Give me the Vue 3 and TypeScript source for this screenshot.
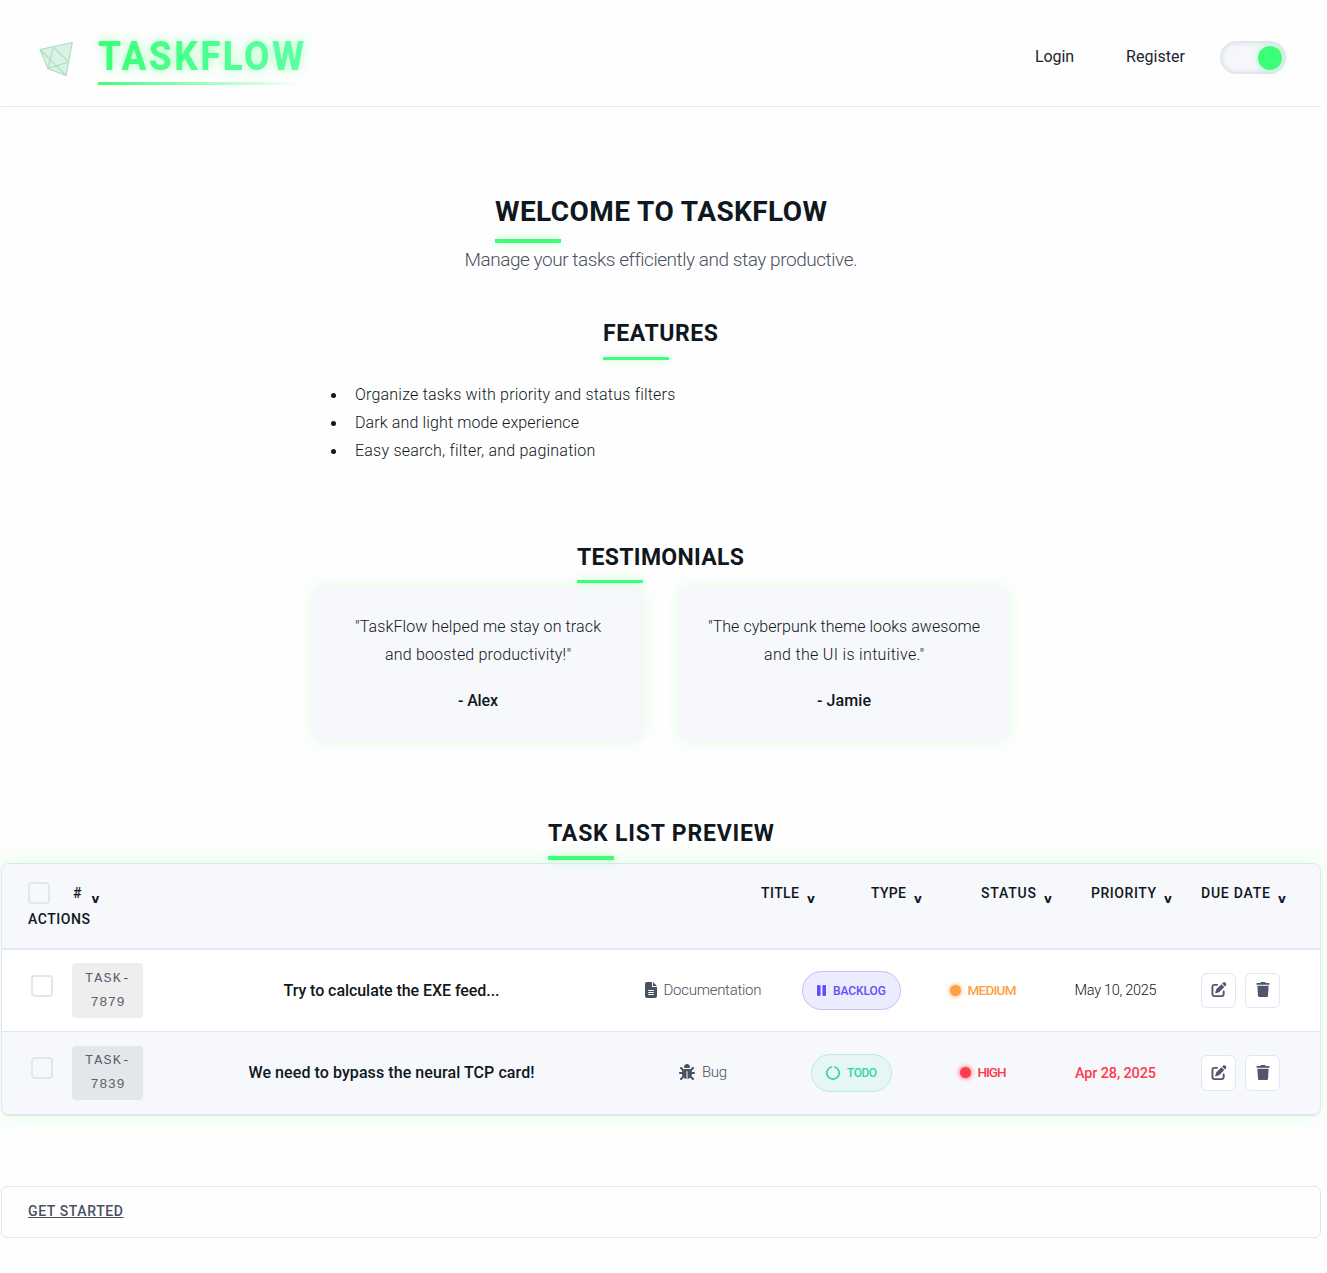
<script setup lang="ts">
import type { Directive } from 'vue'

/** Tracks a single line of text so that it fills the given width in pixels. */
const vFit: Directive<HTMLElement, number> = {
  mounted(el, binding) {
    const count = (el.textContent ?? '').trim().length
    const natural = parseFloat(getComputedStyle(el).width)
    if (count < 2 || !natural) return
    const gap = (binding.value - natural) / (count - 1)
    el.style.letterSpacing = `${gap}px`
    el.style.marginRight = `${-gap}px`
  },
}

const features = [
  { text: 'Organize tasks with priority and status filters', width: 320 },
  { text: 'Dark and light mode experience', width: 224 },
  { text: 'Easy search, filter, and pagination', width: 240 },
]

const testimonials = [
  {
    lines: [
      { text: '"TaskFlow helped me stay on track', width: 246 },
      { text: 'and boosted productivity!"', width: 186 },
    ],
    author: '- Alex',
    width: 40,
  },
  {
    lines: [
      { text: '"The cyberpunk theme looks awesome', width: 272 },
      { text: 'and the UI is intuitive."', width: 160 },
    ],
    author: '- Jamie',
    width: 54,
  },
]

const columns = [
  { key: 'id', label: '#', width: 10 },
  { key: 'title', label: 'TITLE', width: 38 },
  { key: 'type', label: 'TYPE', width: 35 },
  { key: 'status', label: 'STATUS', width: 55 },
  { key: 'priority', label: 'PRIORITY', width: 65 },
  { key: 'due', label: 'DUE DATE', width: 69 },
]

const tasks = [
  {
    id: '7879',
    title: 'Try to calculate the EXE feed...', titleW: 216,
    type: 'Documentation', typeW: 98,
    status: 'BACKLOG', statusW: 53,
    priority: 'MEDIUM', priorityW: 49,
    due: 'May 10, 2025', dueW: 82,
    overdue: false,
  },
  {
    id: '7839',
    title: 'We need to bypass the neural TCP card!', titleW: 286,
    type: 'Bug', typeW: 25,
    status: 'TODO', statusW: 30,
    priority: 'HIGH', priorityW: 29,
    due: 'Apr 28, 2025', dueW: 81,
    overdue: true,
  },
]
</script>

<template>
  <div class="page">
    <header class="top">
      <svg class="gem" viewBox="0 0 36 36" width="36" height="36">
        <path class="gem-face" d="M2 8.5 34.3 1.5 28 34.5 10 27.5Z" />
        <path d="M2 8.5 28 34.5M10 27.5 15.3 6 30.7 21ZM10 27.5 30.7 21" />
      </svg>
      <div class="brand"><span v-fit="229" class="brand-text">TASKFLOW</span></div>
      <nav class="nav">
        <a class="login"><span v-fit="39">Login</span></a>
        <a class="register"><span v-fit="59">Register</span></a>
        <div class="toggle"><i></i></div>
      </nav>
    </header>

    <main>
      <section class="hero">
        <h1><span v-fit="332">WELCOME TO TASKFLOW</span></h1>
        <p><span v-fit="392">Manage your tasks efficiently and stay productive.</span></p>
      </section>

      <section class="features">
        <h2 class="nudged"><span v-fit="115">FEATURES</span></h2>
        <ul>
          <li v-for="f in features" :key="f.text"><span v-fit="f.width">{{ f.text }}</span></li>
        </ul>
      </section>

      <section class="testimonials">
        <h2 class="nudged"><span v-fit="167">TESTIMONIALS</span></h2>
        <div class="cards">
          <article v-for="t in testimonials" :key="t.author" class="card">
            <p v-for="l in t.lines" :key="l.text"><span v-fit="l.width">{{ l.text }}</span></p>
            <p class="author"><span v-fit="t.width">{{ t.author }}</span></p>
          </article>
        </div>
      </section>

      <section class="preview">
        <h2 class="thick"><span v-fit="226">TASK LIST PREVIEW</span></h2>
        <div class="table">
          <div class="thead">
            <i class="check"></i>
            <div v-for="c in columns" :key="c.key" class="th" :class="`th-${c.key}`">
              <span v-fit="c.width">{{ c.label }}</span><b class="sort">v</b>
            </div>
            <div class="th"><span v-fit="62">ACTIONS</span></div>
          </div>

          <div v-for="t in tasks" :key="t.id" class="row">
            <i class="check"></i>
            <div class="task-id"><span v-fit="45">TASK-</span><span v-fit="34">{{ t.id }}</span></div>
            <div class="cell title"><span v-fit="t.titleW">{{ t.title }}</span></div>
            <div class="cell type">
              <svg v-if="t.type === 'Bug'" viewBox="0 0 512 512" width="16" height="16">
                <path d="M256 0c53 0 96 43 96 96v3.6c0 15.7-12.7 28.4-28.4 28.4H188.4c-15.7 0-28.4-12.7-28.4-28.4V96c0-53 43-96 96-96zM41.4 105.4c12.5-12.5 32.8-12.5 45.3 0l64 64c.7 .7 1.3 1.4 1.9 2.1c14.2-7.3 30.4-11.4 47.5-11.4H312c17.1 0 33.2 4.1 47.5 11.4c.6-.7 1.2-1.4 1.9-2.1l64-64c12.5-12.5 32.8-12.5 45.3 0s12.5 32.8 0 45.3l-64 64c-.7 .7-1.4 1.3-2.1 1.9c6.2 12 10.1 25.3 11.1 39.5H480c17.7 0 32 14.3 32 32s-14.3 32-32 32H416c0 24.6-5.5 47.8-15.4 68.6c2.2 1.3 4.2 2.9 6 4.8l64 64c12.5 12.5 12.5 32.8 0 45.3s-32.8 12.5-45.3 0l-63.1-63.1c-24.5 21.8-55.8 36.2-90.3 39.6V240c0-8.8-7.2-16-16-16s-16 7.2-16 16V479.2c-34.5-3.4-65.8-17.8-90.3-39.6L86.6 502.6c-12.5 12.5-32.8 12.5-45.3 0s-12.5-32.8 0-45.3l64-64c1.9-1.9 3.9-3.4 6-4.8C101.5 367.8 96 344.6 96 320H32c-17.7 0-32-14.3-32-32s14.3-32 32-32H96.3c1.1-14.1 5-27.5 11.1-39.5c-.7-.6-1.4-1.2-2.1-1.9l-64-64c-12.5-12.5-12.5-32.8 0-45.3z" />
              </svg>
              <svg v-else viewBox="0 0 384 512" width="12" height="16">
                <path d="M64 0C28.7 0 0 28.7 0 64V448c0 35.3 28.7 64 64 64H320c35.3 0 64-28.7 64-64V160H256c-17.7 0-32-14.3-32-32V0H64zM256 0V128H384L256 0zM112 256H272c8.8 0 16 7.2 16 16s-7.2 16-16 16H112c-8.8 0-16-7.2-16-16s7.2-16 16-16zm0 64H272c8.8 0 16 7.2 16 16s-7.2 16-16 16H112c-8.8 0-16-7.2-16-16s7.2-16 16-16zm0 64H272c8.8 0 16 7.2 16 16s-7.2 16-16 16H112c-8.8 0-16-7.2-16-16s7.2-16 16-16z" />
              </svg>
              <span v-fit="t.typeW">{{ t.type }}</span>
            </div>
            <div class="cell">
              <div class="pill" :class="t.status.toLowerCase()">
                <svg v-if="t.status === 'TODO'" viewBox="0 0 14 14" width="14" height="14">
                  <path d="M5.2 1A6.2 6.2 0 1 0 8.8 1" fill="none" stroke="currentColor" stroke-width="1.7" stroke-linecap="round" />
                </svg>
                <svg v-else viewBox="0 0 9 11" width="9" height="11">
                  <rect x="0" y="0" width="3.6" height="11" rx="1.2" />
                  <rect x="5.4" y="0" width="3.6" height="11" rx="1.2" />
                </svg>
                <span v-fit="t.statusW">{{ t.status }}</span>
              </div>
            </div>
            <div class="cell prio" :class="t.priority.toLowerCase()">
              <i></i><span v-fit="t.priorityW">{{ t.priority }}</span>
            </div>
            <div class="cell due" :class="{ overdue: t.overdue }"><span v-fit="t.dueW">{{ t.due }}</span></div>
            <div class="actions">
              <button type="button">
                <svg viewBox="0 0 512 512" width="16" height="15">
                  <path d="M471.6 21.7c-21.9-21.9-57.3-21.9-79.2 0L362.3 51.7l97.9 97.9 30.1-30.1c21.9-21.9 21.9-57.3 0-79.2L471.6 21.7zm-299.2 220c-6.1 6.1-10.8 13.6-13.5 21.9l-29.6 88.8c-2.9 8.6-.6 18.1 5.8 24.6s15.9 8.7 24.6 5.8l88.8-29.6c8.2-2.7 15.7-7.4 21.9-13.5L437.7 172.3 339.7 74.3 172.4 241.7zM96 64C43 64 0 107 0 160V416c0 53 43 96 96 96H352c53 0 96-43 96-96V320c0-17.7-14.3-32-32-32s-32 14.3-32 32v96c0 17.7-14.3 32-32 32H96c-17.7 0-32-14.3-32-32V160c0-17.7 14.3-32 32-32h96c17.7 0 32-14.3 32-32s-14.3-32-32-32H96z" />
                </svg>
              </button>
              <button type="button">
                <svg viewBox="0 0 448 512" width="14" height="15">
                  <path d="M135.2 17.7L128 32H32C14.3 32 0 46.3 0 64S14.3 96 32 96H416c17.7 0 32-14.3 32-32s-14.3-32-32-32H320l-7.2-14.3C307.4 6.8 296.3 0 284.2 0H163.8c-12.1 0-23.2 6.8-28.6 17.7zM416 128H32L53.2 467c1.6 25.3 22.6 45 47.9 45H346.9c25.3 0 46.3-19.7 47.9-45L416 128z" />
                </svg>
              </button>
            </div>
          </div>
        </div>
      </section>

      <a class="cta"><span v-fit="95">GET STARTED</span></a>
    </main>
  </div>
</template>

<style>
body {
  background: #fefefe;
}
</style>

<style scoped>
.page {
  width: 1320px;
  margin-left: 1px;
  height: 1273px;
  font-family: Roboto, 'Liberation Sans', sans-serif;
  font-size: 16px;
  font-weight: 300;
  color: #0f1720;
}
.page *,
.page *::after {
  box-sizing: border-box;
}
.page span {
  display: inline-block;
  white-space: nowrap;
}
svg {
  display: block;
  fill: currentColor;
}
p,
h1,
h2,
ul {
  margin: 0;
  padding: 0;
}

/* header */
.top {
  height: 107px;
  padding: 8px 35px 0 37px;
  display: flex;
  align-items: center;
  border-bottom: 1px solid #dfe8f0;
}
.gem {
  margin: 3px 24px 0 0;
  fill: none;
  stroke: #a9dfc2;
  stroke-width: 1.1;
}
.gem-face {
  fill: #dcf1e6;
}
.gem path:last-child {
  fill: none;
}
.brand {
  position: relative;
  width: 207px;
  height: 56px;
}
.brand::after {
  content: '';
  position: absolute;
  left: 0;
  right: 0;
  bottom: 0;
  height: 3px;
  background: linear-gradient(90deg, #3cff78, transparent);
}
.brand-text {
  font-size: 41px;
  line-height: 54px;
  font-weight: 800;
  transform: scaleX(0.9);
  transform-origin: 0 50%;
  background: linear-gradient(90deg, #3cff78, #5cffa6);
  -webkit-background-clip: text;
  background-clip: text;
  color: transparent;
  filter: drop-shadow(0 0 6px rgba(60, 255, 110, 0.45));
}
.nav {
  margin-left: auto;
  display: flex;
  align-items: center;
}
.nav a {
  line-height: 28px;
  margin-top: -1px;
  font-weight: 400;
  color: #1b2430;
}
.login {
  width: 91px;
}
.register {
  width: 94px;
}
.toggle {
  width: 66px;
  height: 33px;
  border: 2px solid #e0e8ee;
  border-radius: 17px;
  background: #f6f7fc;
  display: flex;
  justify-content: flex-end;
  padding: 3px 2px;
  box-shadow: inset 0 0 5px rgba(0, 0, 0, 0.1);
}
.toggle i {
  width: 24px;
  height: 24px;
  border-radius: 50%;
  background: #3cff78;
  box-shadow: 0 0 10px rgba(60, 255, 110, 0.3);
}

/* sections */
section {
  display: flex;
  flex-direction: column;
  align-items: center;
}
h1,
h2 {
  position: relative;
  font-weight: 700;
}
h1 {
  height: 50px;
  font-size: 28px;
  line-height: 38px;
}
h2 {
  height: 43px;
  font-size: 23px;
  line-height: 33px;
}
.nudged {
  padding-right: 1px;
}
h1::after,
h2::after {
  content: '';
  position: absolute;
  left: 0;
  bottom: 0;
  width: 66px;
  height: 3px;
  background: #3cff78;
  box-shadow: 0 0 10px rgba(60, 255, 90, 0.35);
}
h1::after,
.thick::after {
  height: 4px;
}
.hero {
  padding-top: 86px;
}
.hero p {
  margin-top: 2px;
  font-size: 19px;
  height: 28px;
  line-height: 30px;
  color: #4a5160;
}
.features {
  margin-top: 44px;
}
.features ul {
  margin-top: 21px;
  width: 660px;
  list-style: none;
}
li {
  height: 28px;
  line-height: 28px;
  display: flex;
  align-items: center;
}
li::before {
  content: '';
  width: 5px;
  height: 5px;
  border-radius: 50%;
  background: #0f1720;
  margin: 1px 19px 0 0;
}
.testimonials {
  margin-top: 76px;
}
.testimonials h2 {
  height: 42px;
  z-index: 1;
}
.cards {
  margin-top: 4px;
  display: flex;
  gap: 36px;
}
.card {
  width: 330px;
  height: 154px;
  padding-top: 26px;
  border-radius: 8px;
  background: #f6f8fc;
  box-shadow: 0 0 15px rgba(60, 255, 90, 0.16);
  text-align: center;
  line-height: 28px;
}
.author {
  margin-top: 18px;
  font-weight: 500;
}
.preview {
  margin-top: 76px;
}

/* table */
.table {
  margin-top: 3px;
  width: 1320px;
  height: 253px;
  border: 1px solid #dfe7f0;
  border-bottom-width: 2px;
  border-radius: 8px;
  overflow: hidden;
  box-shadow: 0 0 20px rgba(60, 255, 90, 0.17);
}
.thead {
  height: 86px;
  padding: 16px 0 0 26px;
  border-bottom: 2px solid #dfe7f0;
  background: #f6f8fc;
  display: flex;
  flex-wrap: wrap;
  align-content: flex-start;
}
.check {
  width: 22px;
  height: 22px;
  border: 2px solid #dfe7f0;
  border-radius: 4px;
}
.thead .check {
  margin: 2px 22px 0 0;
}
.th {
  width: 110px;
  height: 26px;
  line-height: 26px;
  font-size: 14px;
  font-weight: 500;
  display: flex;
}
.th-id {
  width: 689px;
  padding-left: 1px;
}
.th-id .sort {
  padding-left: 10px;
}
.sort {
  font: 700 12px/26px 'DejaVu Sans', sans-serif;
  padding: 6px 0 0 8px;
}
.row {
  display: grid;
  grid-template-columns: 41px 72px 495px 128px 169px 94px 171px 120px;
  align-items: center;
  height: 82px;
  padding-left: 29px;
  background: #fff;
  border-bottom: 1px solid #dfe7f0;
}
.row .check {
  margin-top: -9px;
}
.row:last-child {
  border-bottom: 0;
  background: #f6f8fc;
}
.row:last-child .check {
  margin-top: -10px;
}
.task-id {
  width: 71px;
  height: 55px;
  padding-top: 4px;
  border-radius: 4px;
  background: rgba(10, 30, 20, 0.075);
  display: flex;
  flex-direction: column;
  align-items: center;
  font: 400 13.5px/24px 'Liberation Mono', monospace;
  color: #5b616c;
}
.row:last-child .task-id {
  height: 54px;
  padding-top: 3px;
}
.cell {
  display: flex;
  align-items: center;
  justify-content: center;
  line-height: 24px;
}
.title {
  font-weight: 500;
}
.type {
  gap: 7px;
  font-size: 15px;
  color: #4a5160;
}
.type span {
  margin-top: -2px;
}
.type svg {
  margin-top: -1px;
}
.row:last-child .type svg {
  margin-top: -2px;
}
.pill {
  height: 39px;
  padding: 0 14px;
  border: 1px solid;
  border-radius: 20px;
  display: flex;
  align-items: center;
  gap: 7px;
  font-size: 12px;
  font-weight: 500;
}
.pill.backlog {
  color: #6050fa;
  background: #edebfe;
  border-color: #c6bffb;
}
.pill.todo {
  height: 38px;
  color: #36d3ab;
  background: #e5f6f4;
  border-color: #b9ecde;
}
.prio {
  gap: 7px;
  font-size: 13.5px;
  font-weight: 500;
}
.prio span {
  margin-top: -2px;
}
.prio i {
  width: 11px;
  height: 11px;
  border-radius: 50%;
  background: currentColor;
  box-shadow: 0 0 5px currentColor;
}
.high i {
  margin-top: -1px;
}
.high span {
  margin-top: -3px;
}
.medium {
  color: #ff9f43;
}
.high {
  color: #ff3b4e;
}
.due {
  padding-top: 1px;
  font-size: 14.5px;
}
.overdue {
  color: #ff3b4e;
  font-weight: 500;
}
.actions {
  display: flex;
  gap: 9px;
}
.actions button {
  width: 35px;
  height: 35px;
  padding: 0 0 2px;
  border: 1px solid #dfe7f0;
  border-radius: 6px;
  background: #fff;
  color: #4f5768;
  display: flex;
  align-items: center;
  justify-content: center;
}
.row:last-child .actions button {
  height: 36px;
}

/* call to action */
.cta {
  display: block;
  margin-top: 70px;
  height: 52px;
  padding-left: 26px;
  border: 1px solid #dfe7f0;
  border-radius: 6px;
  font-size: 14px;
  font-weight: 500;
  line-height: 48px;
  color: #4a5160;
}
.cta span {
  text-decoration: underline;
}
</style>
